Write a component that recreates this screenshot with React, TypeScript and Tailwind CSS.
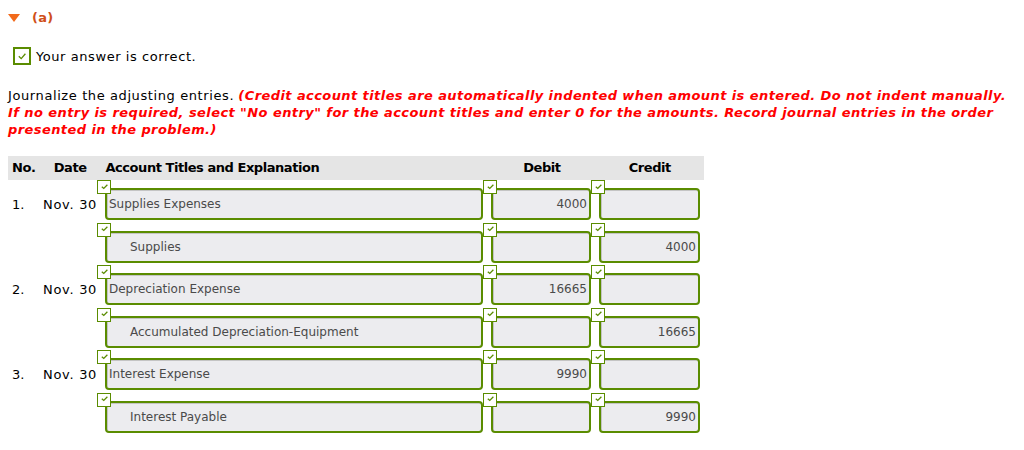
import React from 'react'

type Line = {
  no?: string
  date?: string
  account: string
  credit?: boolean
  debitAmount?: string
  creditAmount?: string
}

const lines: Line[] = [
  { no: '1.', date: 'Nov. 30', account: 'Supplies Expenses', debitAmount: '4000' },
  { account: 'Supplies', credit: true, creditAmount: '4000' },
  { no: '2.', date: 'Nov. 30', account: 'Depreciation Expense', debitAmount: '16665' },
  { account: 'Accumulated Depreciation-Equipment', credit: true, creditAmount: '16665' },
  { no: '3.', date: 'Nov. 30', account: 'Interest Expense', debitAmount: '9990' },
  { account: 'Interest Payable', credit: true, creditAmount: '9990' },
]

function SmallCheck() {
  return (
    <span className="absolute left-0 top-0 z-10 flex h-[14px] w-[14px] items-center justify-center border border-[#5a8c00] bg-white">
      <svg viewBox="0 0 10 10" className="h-[9px] w-[9px] -mt-[2px]">
        <path d="M2 5.2 L4.2 7.2 L8.2 3" fill="none" stroke="#5a8c00" strokeWidth="1.4" />
      </svg>
    </span>
  )
}

function Field({ value, align = 'left', indent = false }: { value?: string; align?: 'left' | 'right'; indent?: boolean }) {
  return (
    <div
      className={`flex h-[32px] items-center rounded-[4px] border-2 border-[#5a8c00] bg-[#ececef] text-[12px] text-[#4a4a4a] shadow-[inset_1px_1px_0_#c4c4c4] ${
        align === 'right' ? 'justify-end pr-[2px]' : indent ? 'pl-[23px]' : 'pl-[2px]'
      }`}
    >
      {value}
    </div>
  )
}

function Cell({ width, children }: { width: string; children: React.ReactNode }) {
  return (
    <div className={`relative shrink-0 pl-[8px] pt-[8px] ${width}`}>
      <SmallCheck />
      {children}
    </div>
  )
}

export default function App() {
  return (
    <div className="min-h-[450px] bg-white font-['DejaVu_Sans',Verdana,sans-serif] text-[13px] text-black">
      <div className="flex items-center gap-[12px] pl-[8px] pt-[8px]">
        <svg viewBox="0 0 12 8" className="h-[8px] w-[12px]">
          <path d="M0 0 H12 L6 8 Z" fill="#f26a1b" />
        </svg>
        <span className="font-bold tracking-[0.3px] text-[#d0501a]">(a)</span>
      </div>

      <div className="mt-[19px] flex items-center gap-[5px] pl-[13px]">
        <span className="flex h-[18px] w-[18px] items-center justify-center border-2 border-[#5a8c00] bg-white">
          <svg viewBox="0 0 10 10" className="h-[10px] w-[10px]">
            <path d="M1.8 5.2 L4.2 7.6 L8.4 2.8" fill="none" stroke="#5a8c00" strokeWidth="1.3" />
          </svg>
        </span>
        <span className="tracking-[0.57px]">Your answer is correct.</span>
      </div>

      <p className="mt-[21px] whitespace-nowrap px-[8px] leading-[17px]">
        <span className="tracking-[0.6px]">Journalize the adjusting entries.</span>{' '}
        <em className="font-bold tracking-[0.42px] text-[#ff0000]">
          (Credit account titles are automatically indented when amount is entered. Do not indent manually.
          <br />
          If no entry is required, select "No entry" for the account titles and enter 0 for the amounts. Record journal
          entries in the order
          <br />
          presented in the problem.)
        </em>
      </p>

      <div className="ml-[8px] mt-[18px] w-[696px]">
        <div className="flex h-[24px] items-center bg-[#e5e5e5] font-bold tracking-[-0.45px]">
          <span className="w-[46px] pl-[4px]">No.</span>
          <span className="w-[51px]">Date</span>
          <span className="w-[386px] pl-[1px]">Account Titles and Explanation</span>
          <span className="w-[108px] text-center">Debit</span>
          <span className="w-[109px] text-center">Credit</span>
        </div>

        <div className="flex flex-col gap-[2.6px]">
          {lines.map((line, i) => (
            <div key={i} className="flex">
              <span className="w-[35px] shrink-0 pl-[4px] pt-[15px]">{line.no}</span>
              <span className="w-[54px] shrink-0 whitespace-nowrap pt-[15px] tracking-[0.7px]">{line.date}</span>
              <Cell width="w-[386px]">
                <Field value={line.account} indent={line.credit} />
              </Cell>
              <Cell width="w-[108px]">
                <Field value={line.debitAmount} align="right" />
              </Cell>
              <Cell width="w-[109px]">
                <Field value={line.creditAmount} align="right" />
              </Cell>
            </div>
          ))}
        </div>
      </div>
    </div>
  )
}
